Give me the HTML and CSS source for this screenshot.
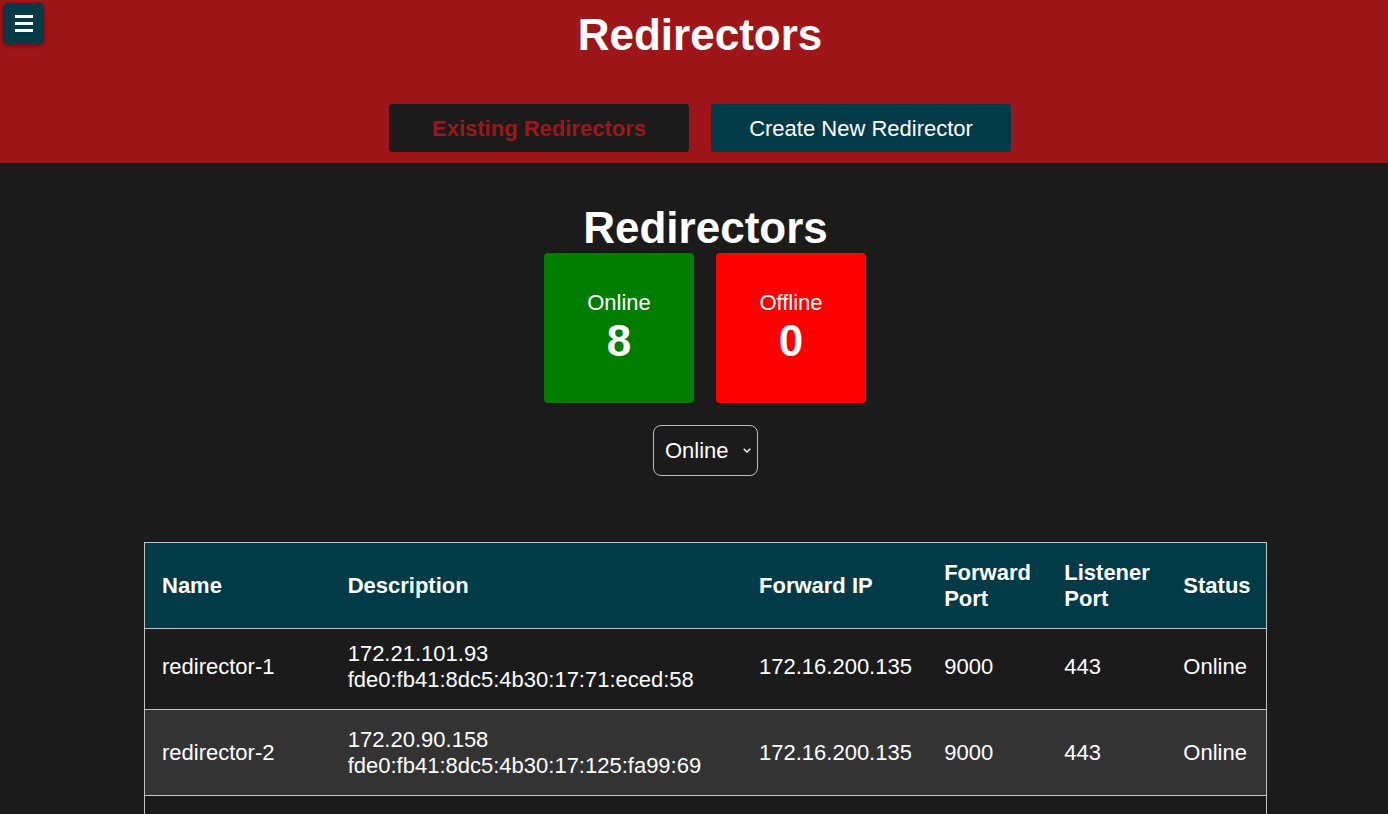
FILE: index.html
```html
<!DOCTYPE html>
<html lang="en">
<head>
<meta charset="utf-8">
<title>Redirectors</title>
<link rel="stylesheet" href="styles.css">
</head>
<body>
<header class="topbar">
  <button class="menu-btn" aria-label="Menu">
    <svg width="18" height="17" viewBox="0 0 18 17"><rect x="0" y="0" width="18" height="3" fill="#fff"/><rect x="0" y="7" width="18" height="3" fill="#fff"/><rect x="0" y="14" width="18" height="3" fill="#fff"/></svg>
  </button>
  <h1 class="top-title">Redirectors</h1>
  <nav class="tabs">
    <button class="tab tab-active">Existing Redirectors</button>
    <button class="tab tab-create">Create New Redirector</button>
  </nav>
</header>
<main class="content">
  <h1 class="main-title">Redirectors</h1>
  <div class="stats">
    <div class="stat stat-online"><span class="stat-label">Online</span><span class="stat-num">8</span></div>
    <div class="stat stat-offline"><span class="stat-label">Offline</span><span class="stat-num">0</span></div>
  </div>
  <div class="select-wrap">
    <select class="filter">
      <option>Online</option>
      <option>Offline</option>
      <option>All</option>
    </select>
    <svg class="chev" width="8" height="5" viewBox="0 0 8 5"><path d="M0.7 0.7 L4 4 L7.3 0.7" fill="none" stroke="#fff" stroke-width="1.3"/></svg>
  </div>
  <table class="grid">
    <thead>
      <tr>
        <th class="c-name">Name</th>
        <th class="c-desc">Description</th>
        <th class="c-ip">Forward IP</th>
        <th class="c-fport">Forward Port</th>
        <th class="c-lport">Listener Port</th>
        <th class="c-status">Status</th>
      </tr>
    </thead>
    <tbody>
      <tr><td>redirector-1</td><td>172.21.101.93<br>fde0:fb41:8dc5:4b30:17:71:eced:58</td><td>172.16.200.135</td><td>9000</td><td>443</td><td>Online</td></tr>
      <tr><td>redirector-2</td><td>172.20.90.158<br>fde0:fb41:8dc5:4b30:17:125:fa99:69</td><td>172.16.200.135</td><td>9000</td><td>443</td><td>Online</td></tr>
      <tr><td>redirector-3</td><td>172.21.44.12<br>fde0:fb41:8dc5:4b30:17:3a:bc21:12</td><td>172.16.200.135</td><td>9000</td><td>443</td><td>Online</td></tr>
      <tr><td>redirector-4</td><td>172.20.17.201<br>fde0:fb41:8dc5:4b30:17:9f:1d02:44</td><td>172.16.200.135</td><td>9000</td><td>443</td><td>Online</td></tr>
    </tbody>
  </table>
</main>
</body>
</html>
```
FILE: styles.css
```css
* { box-sizing: border-box; }
html, body { margin: 0; padding: 0; }
body {
  background: #1b1b1b;
  color: #fff;
  font-family: "Liberation Sans", Arial, sans-serif;
  overflow-x: hidden;
}
.topbar {
  position: relative;
  background: #9e161a;
  height: 163px;
  padding: 9px 0 0 12px;
  display: flex;
  flex-direction: column;
  align-items: center;
}
.menu-btn {
  position: absolute;
  left: 3px;
  top: 3px;
  width: 41px;
  height: 41px;
  border: none;
  border-radius: 5px;
  background: #023a48;
  box-shadow: 0 2px 5px rgba(0,0,0,0.35);
  display: flex;
  align-items: center;
  justify-content: center;
  padding: 0;
}
.top-title {
  margin: 0;
  font-size: 44px;
  font-weight: bold;
  line-height: 51px;
}
.tabs {
  display: flex;
  gap: 22px;
  margin-top: 44px;
}
.tab {
  width: 300px;
  height: 48px;
  border: none;
  border-radius: 3px;
  font-family: "Liberation Sans", Arial, sans-serif;
  font-size: 22px;
  padding: 2px 0 0 0;
}
.tab-active {
  background: #1b1b1b;
  color: #9e161a;
  font-weight: bold;
}
.tab-create {
  background: #023a48;
  color: #fff;
}
.content {
  padding: 40px 0 0 23px;
  display: flex;
  flex-direction: column;
  align-items: center;
}
.main-title {
  margin: 0;
  font-size: 44px;
  font-weight: bold;
  line-height: 50px;
}
.stats {
  display: flex;
  gap: 22px;
  margin-right: 1px;
}
.stat {
  width: 150px;
  height: 150px;
  border-radius: 4px;
  display: flex;
  flex-direction: column;
  align-items: center;
  justify-content: center;
}
.stat-online { background: #007c00; }
.stat-offline { background: #ff0000; }
.stat-label { font-size: 22px; line-height: 25px; }
.stat-num { font-size: 44px; font-weight: bold; line-height: 51px; }
.select-wrap {
  position: relative;
  margin-top: 22px;
}
.filter {
  appearance: none;
  -webkit-appearance: none;
  width: 105px;
  height: 51px;
  background: #1b1b1b;
  color: #fff;
  border: 1px solid #bdbdbd;
  border-radius: 8px;
  font-family: "Liberation Sans", Arial, sans-serif;
  font-size: 22px;
  padding: 0 0 0 11px;
}
.chev {
  position: absolute;
  right: 7px;
  top: 23px;
  pointer-events: none;
}
.grid {
  margin-top: 66px;
  width: 1123px;
  table-layout: fixed;
  border-collapse: collapse;
  border: 1px solid #c4c4c4;
  font-size: 22px;
  line-height: 26px;
}
.grid th {
  background: #023a48;
  text-align: left;
  font-weight: bold;
  padding: 17px 12px 16px 17px;
  vertical-align: middle;
}
.grid td {
  padding: 17px 12px 16px 17px;
  vertical-align: middle;
}
.grid tbody tr:first-child td { padding-top: 12px; padding-bottom: 16px; }
.grid tr { border-bottom: 1px solid #c4c4c4; }
.grid tbody tr:nth-child(even) { background: #333333; }
.c-name { width: 186px; }
.c-desc { width: 411px; }
.c-ip { width: 185px; }
.c-fport { width: 120px; }
.c-lport { width: 119px; }
.c-status { width: 100px; }
```
